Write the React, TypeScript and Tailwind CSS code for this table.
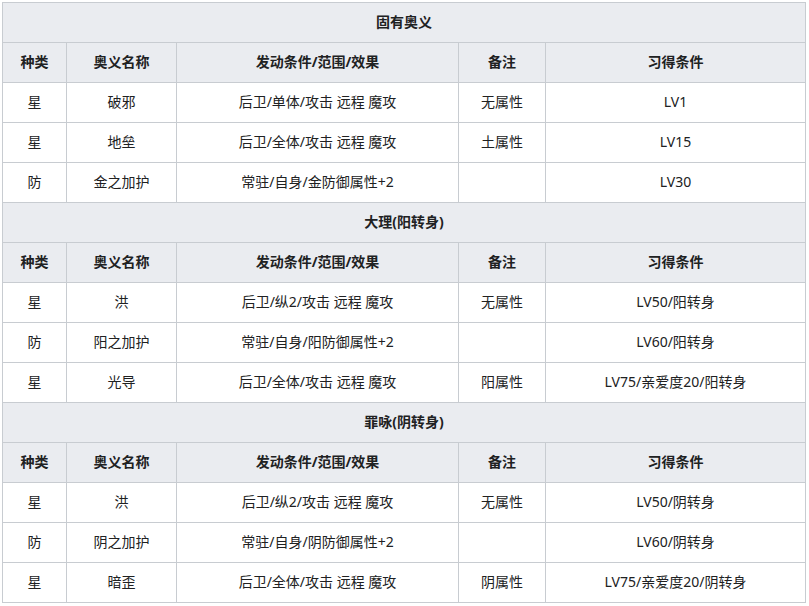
import React from "react";

type Row = [string, string, string, string, string];

const sections: { title: string; rows: Row[] }[] = [
  {
    title: "固有奥义",
    rows: [
      ["星", "破邪", "后卫/单体/攻击 远程 魔攻", "无属性", "LV1"],
      ["星", "地垒", "后卫/全体/攻击 远程 魔攻", "土属性", "LV15"],
      ["防", "金之加护", "常驻/自身/金防御属性+2", "", "LV30"],
    ],
  },
  {
    title: "大理(阳转身)",
    rows: [
      ["星", "洪", "后卫/纵2/攻击 远程 魔攻", "无属性", "LV50/阳转身"],
      ["防", "阳之加护", "常驻/自身/阳防御属性+2", "", "LV60/阳转身"],
      ["星", "光导", "后卫/全体/攻击 远程 魔攻", "阳属性", "LV75/亲爱度20/阳转身"],
    ],
  },
  {
    title: "罪咏(阴转身)",
    rows: [
      ["星", "洪", "后卫/纵2/攻击 远程 魔攻", "无属性", "LV50/阴转身"],
      ["防", "阴之加护", "常驻/自身/阴防御属性+2", "", "LV60/阴转身"],
      ["星", "暗歪", "后卫/全体/攻击 远程 魔攻", "阴属性", "LV75/亲爱度20/阴转身"],
    ],
  },
];

const headers = ["种类", "奥义名称", "发动条件/范围/效果", "备注", "习得条件"];

export default function App() {
  return (
    <div
      className="bg-white p-[2px] text-[14px] text-[#202122]"
      style={{ fontFamily: '"Noto Sans", "Noto Sans CJK SC", sans-serif' }}
    >
      <table className="w-[803px] border-collapse table-fixed">
        <colgroup>
          <col className="w-[64px]" />
          <col className="w-[110px]" />
          <col className="w-[282px]" />
          <col className="w-[87px]" />
          <col className="w-[260px]" />
        </colgroup>
        <tbody>
          {sections.map((s) => (
            <React.Fragment key={s.title}>
              <tr className="h-[40px]">
                <th
                  colSpan={5}
                  className="border border-[#c8ccd1] bg-[#eaecf0] font-bold text-center p-0 pb-[1px] leading-none"
                >
                  {s.title}
                </th>
              </tr>
              <tr className="h-[40px]">
                {headers.map((h) => (
                  <th
                    key={h}
                    className="border border-[#c8ccd1] bg-[#eaecf0] font-bold text-center p-0 pb-[1px] leading-none"
                  >
                    {h}
                  </th>
                ))}
              </tr>
              {s.rows.map((r, i) => (
                <tr key={i} className="h-[40px]">
                  {r.map((c, j) => (
                    <td
                      key={j}
                      className="border border-[#c8ccd1] bg-white text-center p-0 pb-[1px] leading-none"
                    >
                      {c}
                    </td>
                  ))}
                </tr>
              ))}
            </React.Fragment>
          ))}
        </tbody>
      </table>
    </div>
  );
}
